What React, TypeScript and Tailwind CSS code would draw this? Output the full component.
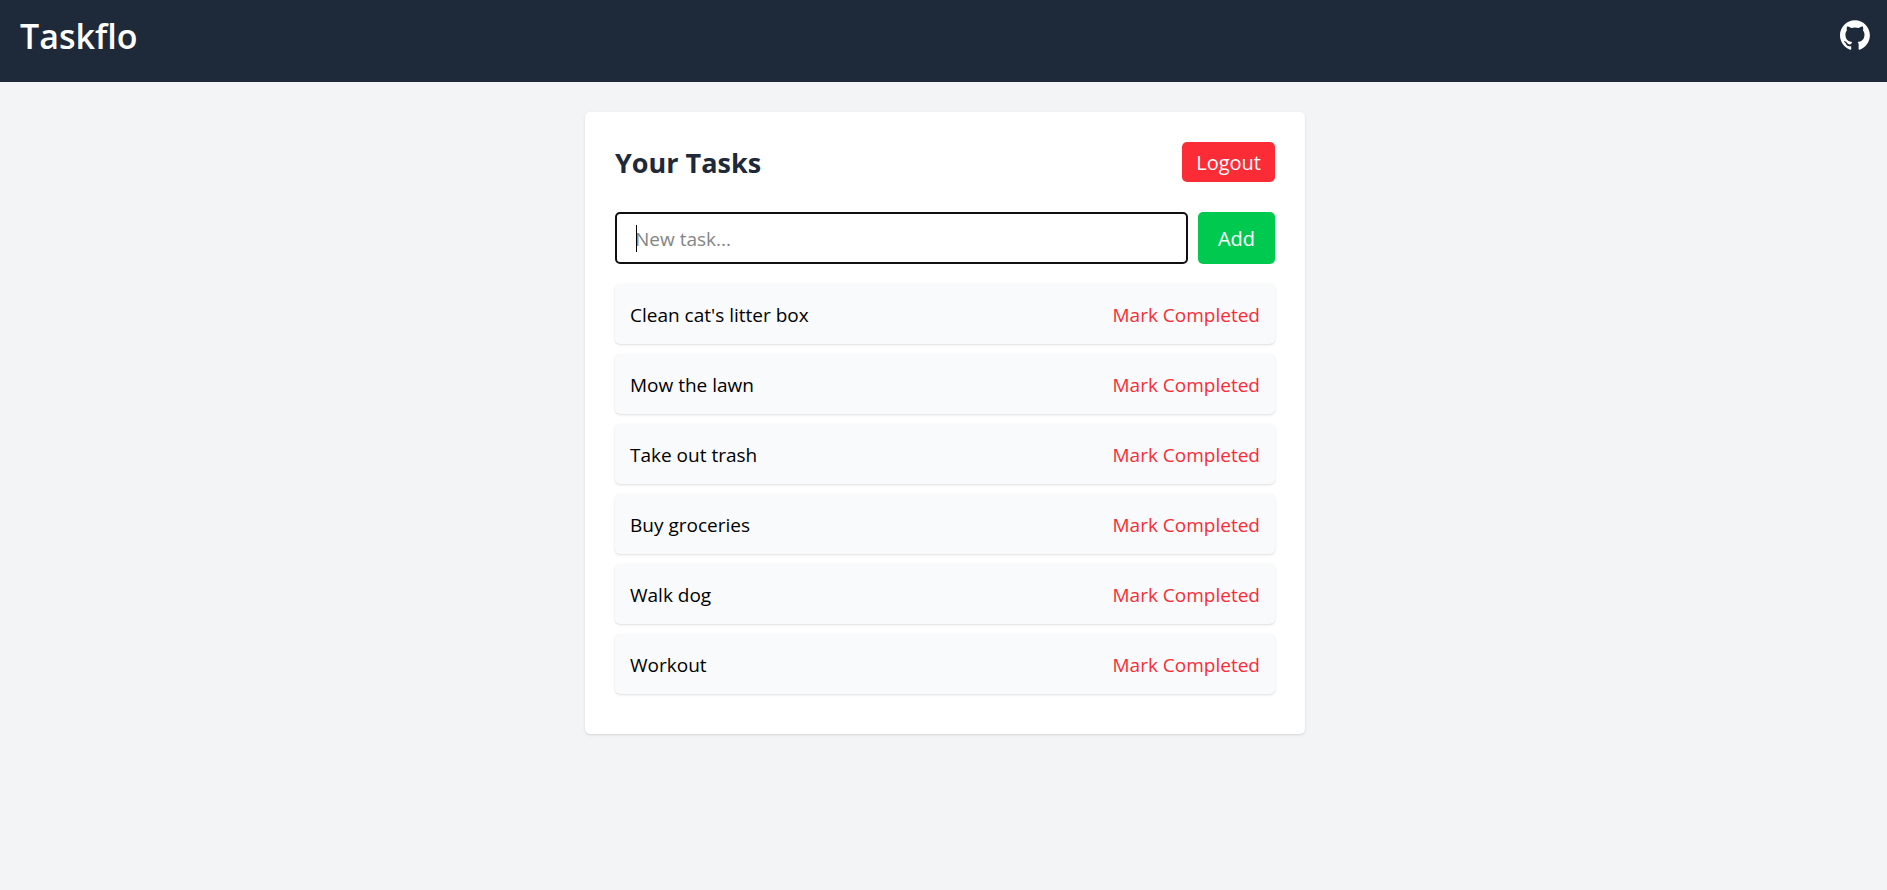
import { useState } from "react";

const initialTasks = [
  "Clean cat's litter box",
  "Mow the lawn",
  "Take out trash",
  "Buy groceries",
  "Walk dog",
  "Workout",
];

function GithubMark() {
  return (
    <svg viewBox="0 0 98 96" className="size-[30px]" fill="currentColor" aria-hidden="true">
      <path
        fillRule="evenodd"
        clipRule="evenodd"
        d="M48.854 0C21.839 0 0 22 0 49.217c0 21.756 13.993 40.172 33.405 46.69 2.427.49 3.316-1.059 3.316-2.362 0-1.141-.08-5.052-.08-9.127-13.59 2.934-16.42-5.867-16.42-5.867-2.184-5.704-5.42-7.17-5.42-7.17-4.448-3.015.324-3.015.324-3.015 4.934.326 7.523 5.052 7.523 5.052 4.367 7.496 11.404 5.378 14.235 4.074.404-3.178 1.699-5.378 3.074-6.6-10.839-1.141-22.243-5.378-22.243-24.283 0-5.378 1.94-9.778 5.014-13.2-.485-1.222-2.184-6.275.486-13.038 0 0 4.125-1.304 13.426 5.052a46.97 46.97 0 0 1 12.214-1.63c4.125 0 8.33.571 12.213 1.63 9.302-6.356 13.427-5.052 13.427-5.052 2.67 6.763.97 11.816.485 13.038 3.155 3.422 5.015 7.822 5.015 13.2 0 18.905-11.404 23.06-22.324 24.283 1.78 1.548 3.316 4.481 3.316 9.126 0 6.6-.08 11.897-.08 13.526 0 1.304.89 2.853 3.316 2.364 19.412-6.52 33.405-24.935 33.405-46.691C97.707 22 75.788 0 48.854 0z"
      />
    </svg>
  );
}

function Header() {
  return (
    <header className="flex h-[82px] items-start justify-between bg-[#1e2939] pt-4 pr-[17px] pl-5 text-white">
      <h1 className="text-[34px] leading-10 font-semibold">Taskflo</h1>
      <a href="#github" aria-label="GitHub" className="pt-1">
        <GithubMark />
      </a>
    </header>
  );
}

export default function App() {
  const [tasks, setTasks] = useState(initialTasks);
  const [draft, setDraft] = useState("");

  function addTask(event: React.FormEvent) {
    event.preventDefault();
    if (!draft.trim()) return;
    setTasks([draft.trim(), ...tasks]);
    setDraft("");
  }

  return (
    <div className="min-h-screen bg-[#f3f4f6] font-['Open_Sans','Noto_Sans',sans-serif] text-[19px] leading-[30px] text-black">
      <Header />
      <main className="pt-[30px] pl-[3px]">
        <section className="mx-auto max-w-[720px] rounded-[5px] bg-white p-[30px] shadow-sm">
          <div className="mb-[30px] flex items-center justify-between">
            <h2 className="pt-0.5 text-[27px] leading-[38px] font-bold text-[#1e2939]">Your Tasks</h2>
            <button
              type="button"
              className="h-10 rounded-[5px] bg-[#fb2c36] px-[14px] pt-0.5 text-[20px] text-white"
            >
              Logout
            </button>
          </div>
          <form onSubmit={addTask} className="mb-5 flex gap-[10px]">
            <div className="relative min-w-0 flex-1">
              <input
                autoFocus
                aria-label="New task"
                placeholder="New task..."
                value={draft}
                onChange={(event) => setDraft(event.target.value)}
                className="peer h-[52px] w-full rounded-[5px] border-2 border-[#101010] px-[18px] pt-0.5 outline-none placeholder:text-[#858585] placeholder-shown:caret-transparent"
              />
              <span className="pointer-events-none absolute top-[13px] left-[21px] hidden h-[27px] w-px bg-black peer-placeholder-shown:block" />
            </div>
            <button
              type="submit"
              className="rounded-[5px] bg-[#00c950] px-5 pt-0.5 text-[20px] text-white"
            >
              Add
            </button>
          </form>
          <ul className="mb-[10px] flex flex-col gap-[10px]">
            {tasks.map((task, index) => (
              <li
                key={task}
                className="flex h-[60px] items-center justify-between rounded-[5px] bg-[#f9fafb] px-[15px] pt-0.5 shadow-sm"
              >
                <span>{task}</span>
                <button
                  type="button"
                  className="text-[#fb2c36]"
                  onClick={() => setTasks(tasks.filter((_, i) => i !== index))}
                >
                  Mark Completed
                </button>
              </li>
            ))}
          </ul>
        </section>
      </main>
    </div>
  );
}
